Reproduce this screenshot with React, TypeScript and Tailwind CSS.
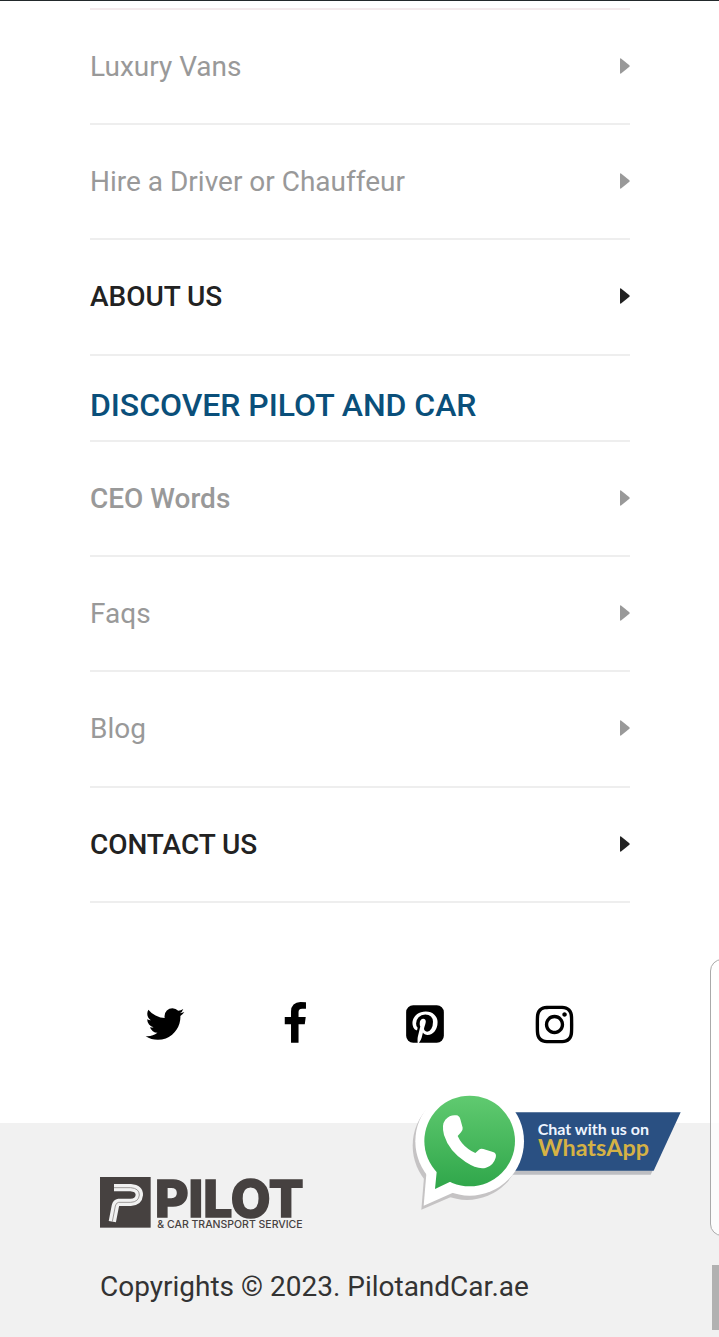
import { FaInstagram } from "react-icons/fa";

type MenuItem = {
  label: string;
  row: string;
  text: string;
};

const services: MenuItem[] = [
  { label: "Luxury Vans", row: "h-[115px]", text: "text-[#999]" },
  { label: "Hire a Driver or Chauffeur", row: "h-[115px]", text: "text-[#999]" },
  { label: "ABOUT US", row: "h-[116px]", text: "font-medium tracking-[-0.03px] text-[#222]" },
];

const discover: MenuItem[] = [
  { label: "CEO Words", row: "h-[115px]", text: "font-medium text-[#999]" },
  { label: "Faqs", row: "h-[115px]", text: "text-[#999]" },
  { label: "Blog", row: "h-[116px]", text: "text-[#999]" },
  { label: "CONTACT US", row: "h-[115px]", text: "font-medium tracking-[-0.06px] text-[#222]" },
];

const MenuRow = ({ item }: { item: MenuItem }) => (
  <li className={`flex items-center justify-between border-b-2 border-[#eee] text-[28px] ${item.row} ${item.text}`}>
    <a href="#">{item.label}</a>
    <svg viewBox="0 0 10 16" className="mb-0.5 h-4 w-2.5 fill-current">
      <path d="M0 1Q0 0 1 .5L9.4 7.2Q10 8 9.4 8.8L1 15.5Q0 16 0 15Z" />
    </svg>
  </li>
);

const TwitterIcon = () => (
  <svg viewBox="0 0 1792 1792" className="size-11 fill-black">
    <path d="M1684 408q-67 98-162 167 1 14 1 42 0 130-38 259.5t-115.5 248.5-184.5 210.5-258 146-323 54.5q-271 0-496-145 35 4 78 4 225 0 401-138-105-2-188-64.5t-114-159.5q33 5 61 5 43 0 85-11-112-23-185.5-111.5t-73.5-205.5v-4q68 38 146 41-66-44-105-115t-39-154q0-88 44-163 121 149 294.5 238.5t371.5 99.5q-8-38-8-74 0-134 94.5-228.5t228.5-94.5q140 0 236 102 109-21 205-78-37 115-142 178 93-10 186-50z" />
  </svg>
);

const FacebookIcon = () => (
  <svg viewBox="0 0 1792 1792" className="size-11 fill-black">
    <path d="M1343 12v264h-157q-86 0-116 36t-30 108v189h293l-39 296h-254v759h-306v-759h-255v-296h255v-218q0-186 104-288.5t277-102.5q147 0 228 12z" />
  </svg>
);

const PinterestIcon = () => (
  <svg viewBox="0 0 1792 1792" className="size-11 fill-black">
    <path d="M1376 128q119 0 203.5 84.5t84.5 203.5v960q0 119-84.5 203.5t-203.5 84.5h-725q85-122 108-210 9-34 53-209 21 39 73.5 67t112.5 28q181 0 295.5-147.5t114.5-373.5q0-84-35-162.5t-96.5-139-152.5-97-197-36.5q-104 0-194.5 28.5t-153 76.5-107.5 109.5-66.5 128-21.5 132.5q0 102 39.5 180t116.5 110q13 5 23.5 0t14.5-19q10-44 15-61 6-23-11-42-50-62-50-150 0-150 103.5-256.5t270.5-106.5q149 0 232.5 81t83.5 210q0 168-67.5 286t-173.5 118q-60 0-97-43.5t-23-103.5q8-34 26.5-92.5t29.5-102 11-74.5q0-49-26.5-81.5t-75.5-32.5q-61 0-103.5 56.5t-42.5 139.5q0 72 24 121l-98 414q-24 100-7 254h-183q-119 0-203.5-84.5t-84.5-203.5v-960q0-119 84.5-203.5t203.5-84.5h960z" />
  </svg>
);

const PilotLogo = () => (
  <svg viewBox="0 0 612 156" className="h-[52px] w-[204px] overflow-visible">
    <rect y="3" width="152" height="152" fill="#464140" />
    <path d="M42 35H92Q118 37 118 57Q116 78 92 79H56Q48 80 46 90L37 137" fill="none" stroke="#f1f1f1" strokeWidth="22" />
    <path d="M42 35H92Q118 37 118 57Q116 78 92 79H56Q48 80 46 90L37 137" fill="none" stroke="#8d8887" strokeWidth="2.5" />
    <text x="165" y="122" textLength="446" lengthAdjust="spacingAndGlyphs" fill="#464140" stroke="#464140" strokeWidth="5" className="font-[Inter] text-[154px] font-extrabold">PILOT</text>
    <text x="172" y="155" textLength="436" lengthAdjust="spacingAndGlyphs" fill="#464140" className="font-[Inter] text-[31px] font-medium">&amp; CAR TRANSPORT SERVICE</text>
  </svg>
);

const WhatsAppBadge = () => (
  <svg viewBox="0 0 870 420" className="h-[140px] w-[290px]">
    <defs>
      <linearGradient id="wa" gradientUnits="userSpaceOnUse" x1="0" y1="47" x2="0" y2="327">
        <stop offset="0" stopColor="#60ca70" />
        <stop offset="1" stopColor="#2fa64a" />
      </linearGradient>
    </defs>
    <path d="M340 108H835L752 284H320Z" fill="#bdbec2" />
    <path d="M340 97H842L761 272H330Z" fill="#2a5082" />
    <g fill="#c5c3c4">
      <circle cx="201" cy="197" r="163" />
      <path d="M73 280L64 389L160 348Z" />
    </g>
    <g fill="#fff">
      <circle cx="209" cy="184" r="163" />
      <path d="M80 270L71 377L164 336Z" />
    </g>
    <g fill="url(#wa)">
      <circle cx="209" cy="183" r="136" />
      <path d="M110 260V276L105 327L149 306L170 300Z" />
    </g>
    <path d="M136 119Q151 103 169 106Q178 107 181 118L188 143Q189 150 183 157L173 168Q184 192 205 207Q216 215 226 219L237 209Q242 204 250 207L279 216Q291 220 287 233Q280 257 258 263Q234 270 197 246Q147 214 132 165Q124 134 136 119Z" fill="#fff" />
    <text x="413" y="166" textLength="334" lengthAdjust="spacingAndGlyphs" fill="#eef5ff" className="font-[Lato] text-[45px] font-bold">Chat with us on</text>
    <text x="414" y="228" textLength="333" lengthAdjust="spacingAndGlyphs" fill="#d5b245" className="font-[Lato] text-[66px] font-bold">WhatsApp</text>
  </svg>
);

export default function App() {
  return (
    <div className="relative flex h-[1337px] w-[719px] flex-col overflow-hidden border-t border-[#22292b] bg-white font-[Roboto,sans-serif]">
      <nav className="mx-[90px] w-[540px] pt-[7px]">
        <ul className="border-t-2 border-[#f4eaec]">
          {services.map((item) => (
            <MenuRow key={item.label} item={item} />
          ))}
        </ul>
        <h2 className="flex h-[86px] items-end border-b-2 border-[#eee] pb-[11px] text-[32px] leading-[48px] font-medium tracking-[-0.05px] text-[#0a4f7a]">
          DISCOVER PILOT AND CAR
        </h2>
        <ul>
          {discover.map((item) => (
            <MenuRow key={item.label} item={item} />
          ))}
        </ul>
      </nav>

      <div className="mx-[100px] mt-[99px] grid h-11 w-[520px] grid-cols-4 items-center justify-items-center">
        <a href="#"><TwitterIcon /></a>
        <a href="#"><FacebookIcon /></a>
        <a href="#"><PinterestIcon /></a>
        <a href="#" className="pr-px"><FaInstagram className="size-[43px]" /></a>
      </div>

      <footer className="mt-[77px] flex-1 bg-[#f1f1f1] px-[100px] pt-[53px]">
        <PilotLogo />
        <p className="mt-[38px] text-[28px] leading-[42px] text-[#333]">Copyrights © 2023. PilotandCar.ae</p>
      </footer>

      <a href="#" className="absolute top-[1079px] left-[400px]">
        <WhatsAppBadge />
      </a>
      {/* edge panel handle and scrollbar */}
      <div className="absolute top-[958px] left-[710px] h-[277px] w-6 rounded-xl border border-[#aaa] bg-white/80" />
      <div className="absolute top-[1264px] left-[712px] h-[65px] w-[7px] bg-[#b1b1b1]" />
    </div>
  );
}
